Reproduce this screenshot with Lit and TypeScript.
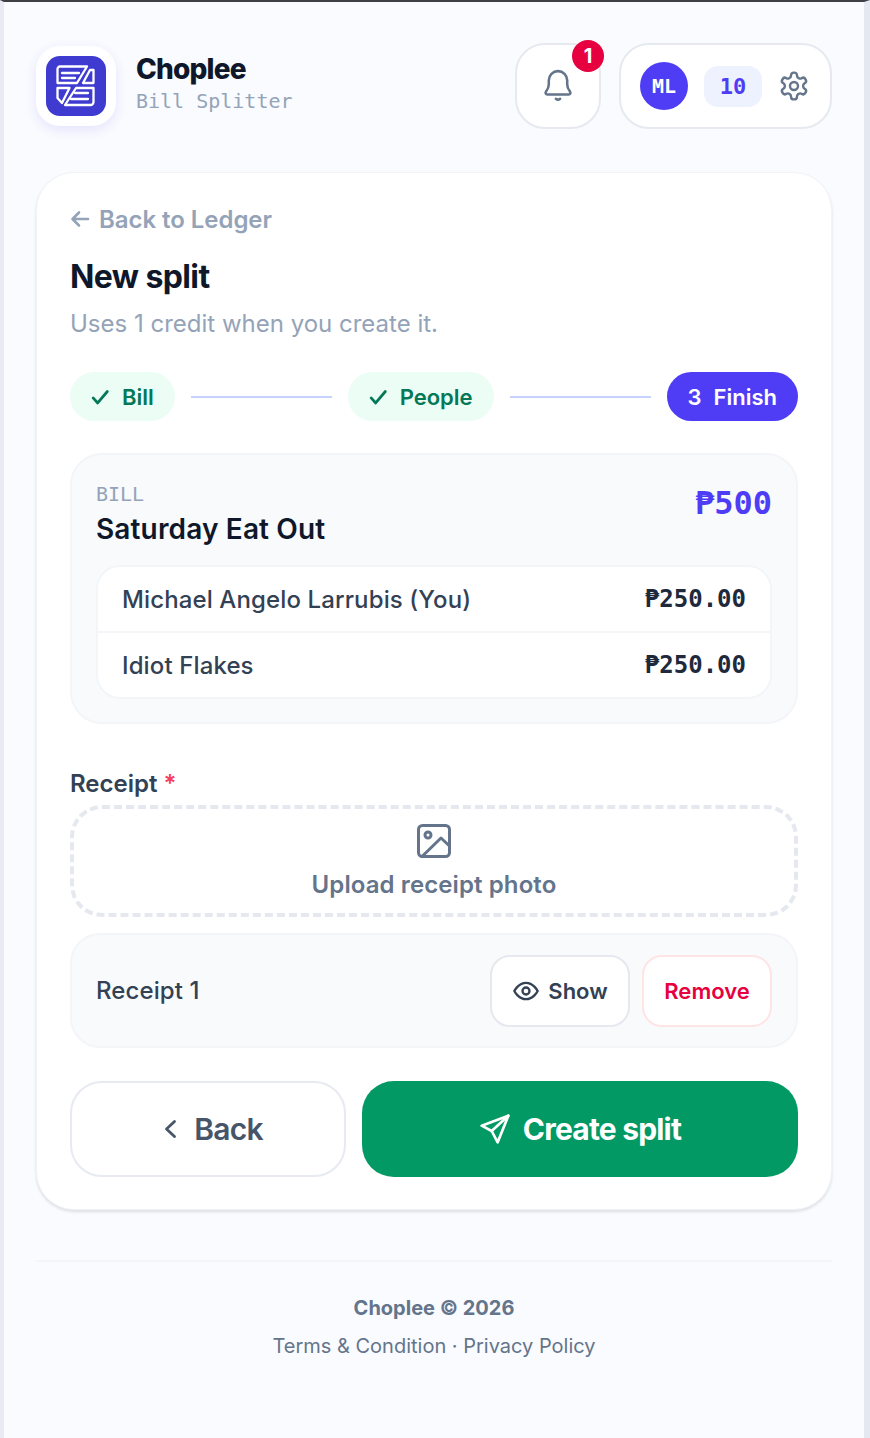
import { LitElement, html, css } from 'lit';
import { customElement } from 'lit/decorators.js';

const MONO = css`"DejaVu Sans Mono", "Liberation Mono", monospace`;

@customElement('app-root')
export class AppRoot extends LitElement {
  static styles = css`
    :host {
      display: block;
      font-family: Inter, "Noto Sans", sans-serif;
      color: #0f172a;
    }
    * { box-sizing: border-box; }

    .frame {
      min-height: 1438px;
      background: #f9fbfe;
      border-top: 2px solid #3f3f46;
      border-left: 4px solid #e8ebf3;
      border-right: 6px solid #e4e8f0;
      padding: 41px 32px 0;
    }

    /* header */
    .top { display: flex; align-items: center; height: 86px; gap: 18px; }
    .logo {
      width: 80px; height: 80px; border-radius: 24px; background: #fff;
      display: flex; align-items: center; justify-content: center;
      box-shadow: 0 4px 12px rgba(79,61,245,0.12);
    }
    .logo-in {
      width: 60px; height: 60px; border-radius: 14px; background: #3f3bd0;
      display: flex; align-items: center; justify-content: center;
    }
    .brand { flex: 1; margin-left: 2px; padding-bottom: 4px; }
    .brand b {
      display: block; font-size: 28px; line-height: 32px; font-weight: 800; letter-spacing: -0.8px;
    }
    .brand span {
      display: block; margin-top: 2px; font: 400 20px/28px ${MONO}; color: #94a3b8;
    }
    .bell, .pill {
      height: 86px; background: #fff; border: 2px solid #e6e9f0; border-radius: 30px;
      display: flex; align-items: center;
    }
    .bell { width: 86px; position: relative; justify-content: center; }
    .badge {
      position: absolute; top: -5px; right: -5px; width: 32px; height: 32px; border-radius: 50%;
      background: #e6003f; color: #fff; font: 700 20px/32px Inter, sans-serif; text-align: center;
    }
    .pill { width: 213px; padding-left: 19px; }
    .avatar {
      width: 48px; height: 48px; border-radius: 50%; background: #4f3df5; color: #fff;
      font: 700 20px/48px ${MONO}; text-align: center;
    }
    .credits {
      width: 58px; height: 41px; margin: 0 16px 0 16px; border-radius: 14px; background: #eef2ff;
      color: #4f3df5; font: 700 22px/41px ${MONO}; text-align: center;
    }
    .pill svg, .bell svg { display: block; }

    /* card */
    .card {
      margin-top: 43px; height: 1038px; background: #fff; border-radius: 38px;
      padding: 32px 33px 0;
      border: 1px solid #f1f3f8;
      box-shadow: 0 2px 3px rgba(15,23,42,0.12);
    }
    .back-link {
      display: flex; align-items: center; gap: 9px; height: 28px;
      font-size: 24px; font-weight: 600; color: #94a3b8; letter-spacing: -0.05px;
    }
    h1 { margin: 26px 0 0; font-size: 32px; line-height: 36px; font-weight: 700; letter-spacing: -0.6px; }
    .sub { margin: 12px 0 0; font-size: 24px; line-height: 34px; color: #94a3b8; font-weight: 400; }

    .steps { display: flex; align-items: center; gap: 16px; margin-top: 31px; }
    .step {
      height: 49px; border-radius: 25px; background: #ecfdf5; color: #047857;
      font-size: 22px; font-weight: 600; display: flex; align-items: center; gap: 11px; padding: 0 21px 0 19px;
    }
    .step.now { background: #4f3df5; color: #fff; padding: 0 21px; gap: 12px; }
    .line { flex: 1; height: 2px; background: #c7d2fe; }

    .bill {
      margin-top: 32px; height: 271px; background: #f8fafc; border: 2px solid #f3f5f9; border-radius: 32px;
      padding: 25px 24px 0;
    }
    .bill-head { display: flex; justify-content: space-between; }
    .bill-label { font: 400 20px/28px ${MONO}; color: #94a3b8; }
    .bill-name { font-size: 28px; line-height: 36px; font-weight: 600; letter-spacing: 0.15px; margin-top: 3px; }
    .bill-total { font: 700 32px/44px ${MONO}; color: #4f3df5; margin-top: 1px; }
    .rows {
      margin-top: 18px; background: #fff; border: 2px solid #f3f5f9; border-radius: 24px;
      height: 134px; display: flex; flex-direction: column;
    }
    .row {
      flex: 1; display: flex; align-items: center; justify-content: space-between; padding: 0 24px;
      font-size: 24px; letter-spacing: 0.12px; font-weight: 500; color: #334155;
    }
    .row + .row { border-top: 2px solid #f3f5f9; }
    .row span:last-child { font: 700 24px/1 ${MONO}; letter-spacing: 0; color: #1e293b; }

    .label { margin-top: 45px; font-size: 24px; line-height: 30px; font-weight: 600; color: #334155; }
    .label i { font-style: normal; color: #f43f5e; }
    .drop {
      margin-top: 6px; height: 112px; border: 4px dashed #e5e8ef; border-radius: 32px;
      display: flex; flex-direction: column; align-items: center; padding-top: 14px; gap: 10px;
      font-size: 24px; letter-spacing: 0.1px; font-weight: 600; color: #64748b; line-height: 32px;
    }
    .receipt {
      margin-top: 16px; height: 115px; background: #f8fafc; border: 2px solid #f3f5f9; border-radius: 30px;
      padding: 0 24px; display: flex; align-items: center; gap: 12px;
      font-size: 24px; letter-spacing: 0.1px; font-weight: 500; color: #334155;
    }
    .receipt .name { flex: 1; }
    .btn {
      height: 72px; background: #fff; border: 2px solid #e5e8ef; border-radius: 20px;
      display: flex; align-items: center; justify-content: center; gap: 8px;
      font-size: 22px; letter-spacing: 0; font-weight: 600; color: #334155;
    }
    .show { width: 140px; }
    .remove { width: 130px; border-color: #ffe4e6; color: #e6003f; }

    .actions { display: flex; gap: 16px; margin-top: 33px; }
    .act {
      height: 96px; border-radius: 32px; display: flex; align-items: center; justify-content: center;
      font-size: 30px; font-weight: 700; letter-spacing: -0.8px;
    }
    .act-back { width: 276px; background: #fff; border: 2px solid #e7eaf1; color: #475569; gap: 17px; font-weight: 600; padding-left: 8px; }
    .act-go { flex: 1; background: #029965; color: #fff; gap: 12px; }

    footer {
      margin-top: 50px; border-top: 2px solid #f3f5f9; padding-top: 32px; text-align: center;
      font-size: 20px; color: #64748b;
    }
    footer b { display: block; font-weight: 700; line-height: 28px; }
    footer div { margin-top: 10px; line-height: 28px; }
  `;

  private check() {
    return html`<svg width="22" height="22" viewBox="0 0 24 24" fill="none" stroke="#047857" stroke-width="3" stroke-linecap="round" stroke-linejoin="round"><path d="M4.500 13l5 5.500L20 6"/></svg>`;
  }

  render() {
    return html`
      <div class="frame">
        <div class="top">
          <div class="logo">
            <div class="logo-in">
              <svg width="40" height="42" viewBox="0 0 40 42" fill="none" stroke="#fff" stroke-width="2.300" stroke-linecap="round" stroke-linejoin="round">
                <path d="M1.500 18V4a2.500 2.500 0 0 1 2.500-2.500h27L21 18z"/>
                <path d="M6 8h17M6 13h13"/>
                <path d="M34 5h3.500v13H27z"/>
                <path d="M1.500 23h12L6 38l-4.500-5z"/>
                <path d="M20 23h17.500v14a3 3 0 0 1-3 3H9z"/>
                <path d="M19 28h13M15 34h17"/>
              </svg>
            </div>
          </div>
          <div class="brand"><b>Choplee</b><span>Bill Splitter</span></div>
          <div class="bell">
            <svg width="34" height="34" viewBox="0 0 24 24" fill="none" stroke="#64748b" stroke-width="1.800" stroke-linecap="round" stroke-linejoin="round">
              <path d="M5.500 8a6.500 6.500 0 0 1 13 0v3c0 2 .8 3.500 2 5 .6.800.2 2-1 2H4.500c-1.200 0-1.600-1.200-1-2 1.200-1.500 2-3 2-5z"/>
              <path d="M10.500 21c.8.700 2.200.700 3 0"/>
            </svg>
            <span class="badge">1</span>
          </div>
          <div class="pill">
            <div class="avatar">ML</div>
            <div class="credits">10</div>
            <svg width="32" height="32" viewBox="0 0 24 24" fill="none" stroke="#64748b" stroke-width="1.800" stroke-linecap="round" stroke-linejoin="round">
              <path d="M12.220 2h-.44a2 2 0 0 0-2 2v.18a2 2 0 0 1-1 1.730l-.43.250a2 2 0 0 1-2 0l-.15-.08a2 2 0 0 0-2.730.73l-.22.380a2 2 0 0 0 .73 2.730l.15.100a2 2 0 0 1 1 1.720v.510a2 2 0 0 1-1 1.740l-.15.090a2 2 0 0 0-.73 2.730l.22.380a2 2 0 0 0 2.730.730l.15-.08a2 2 0 0 1 2 0l.43.250a2 2 0 0 1 1 1.730V20a2 2 0 0 0 2 2h.44a2 2 0 0 0 2-2v-.18a2 2 0 0 1 1-1.730l.43-.25a2 2 0 0 1 2 0l.15.080a2 2 0 0 0 2.730-.73l.22-.39a2 2 0 0 0-.73-2.730l-.15-.08a2 2 0 0 1-1-1.740v-.5a2 2 0 0 1 1-1.740l.15-.09a2 2 0 0 0 .73-2.730l-.22-.38a2 2 0 0 0-2.730-.73l-.15.080a2 2 0 0 1-2 0l-.43-.25a2 2 0 0 1-1-1.730V4a2 2 0 0 0-2-2z"/>
              <circle cx="12" cy="12" r="3"/>
            </svg>
          </div>
        </div>

        <div class="card">
          <div class="back-link">
            <svg width="20" height="20" viewBox="0 0 20 20" fill="none" stroke="#94a3b8" stroke-width="2.600" stroke-linecap="round" stroke-linejoin="round"><path d="M18 10H3M9 3.500L2.500 10 9 16.500"/></svg>
            Back to Ledger
          </div>
          <h1>New split</h1>
          <p class="sub">Uses 1 credit when you create it.</p>

          <div class="steps">
            <div class="step">${this.check()}Bill</div>
            <div class="line"></div>
            <div class="step">${this.check()}People</div>
            <div class="line"></div>
            <div class="step now"><span>3</span>Finish</div>
          </div>

          <div class="bill">
            <div class="bill-head">
              <div>
                <div class="bill-label">BILL</div>
                <div class="bill-name">Saturday Eat Out</div>
              </div>
              <div class="bill-total">₱500</div>
            </div>
            <div class="rows">
              <div class="row"><span>Michael Angelo Larrubis (You)</span><span>₱250.00</span></div>
              <div class="row"><span>Idiot Flakes</span><span>₱250.00</span></div>
            </div>
          </div>

          <div class="label">Receipt <i>*</i></div>
          <div class="drop">
            <svg width="36" height="36" viewBox="0 0 36 36" fill="none" stroke="#64748b" stroke-width="3" stroke-linecap="round" stroke-linejoin="round">
              <rect x="2.500" y="2.500" width="31" height="31" rx="4"/>
              <circle cx="12" cy="12" r="3"/>
              <path d="M33.500 23L25 15 6 33.500"/>
            </svg>
            Upload receipt photo
          </div>

          <div class="receipt">
            <div class="name">Receipt 1</div>
            <div class="btn show">
              <svg width="28" height="28" viewBox="0 0 24 24" fill="none" stroke="#334155" stroke-width="2" stroke-linecap="round" stroke-linejoin="round">
                <path d="M2 12s3.600-7 10-7 10 7 10 7-3.600 7-10 7-10-7-10-7z"/>
                <circle cx="12" cy="12" r="3"/>
              </svg>
              Show
            </div>
            <div class="btn remove">Remove</div>
          </div>

          <div class="actions">
            <div class="act act-back">
              <svg width="16" height="22" viewBox="0 0 16 22" fill="none" stroke="#475569" stroke-width="2.800" stroke-linecap="round" stroke-linejoin="round"><path d="M13.500 3.500L5.500 11l8 7.500"/></svg>
              Back
            </div>
            <div class="act act-go">
              <svg width="32" height="32" viewBox="0 0 24 24" fill="none" stroke="#fff" stroke-width="2" stroke-linecap="round" stroke-linejoin="round">
                <path d="M22 2L2 9.500l7.500 4L14 22z"/>
                <path d="M22 2L9.500 13.500"/>
              </svg>
              Create split
            </div>
          </div>
        </div>

        <footer>
          <b>Choplee © 2026</b>
          <div>Terms &amp; Condition · Privacy Policy</div>
        </footer>
      </div>
    `;
  }
}
